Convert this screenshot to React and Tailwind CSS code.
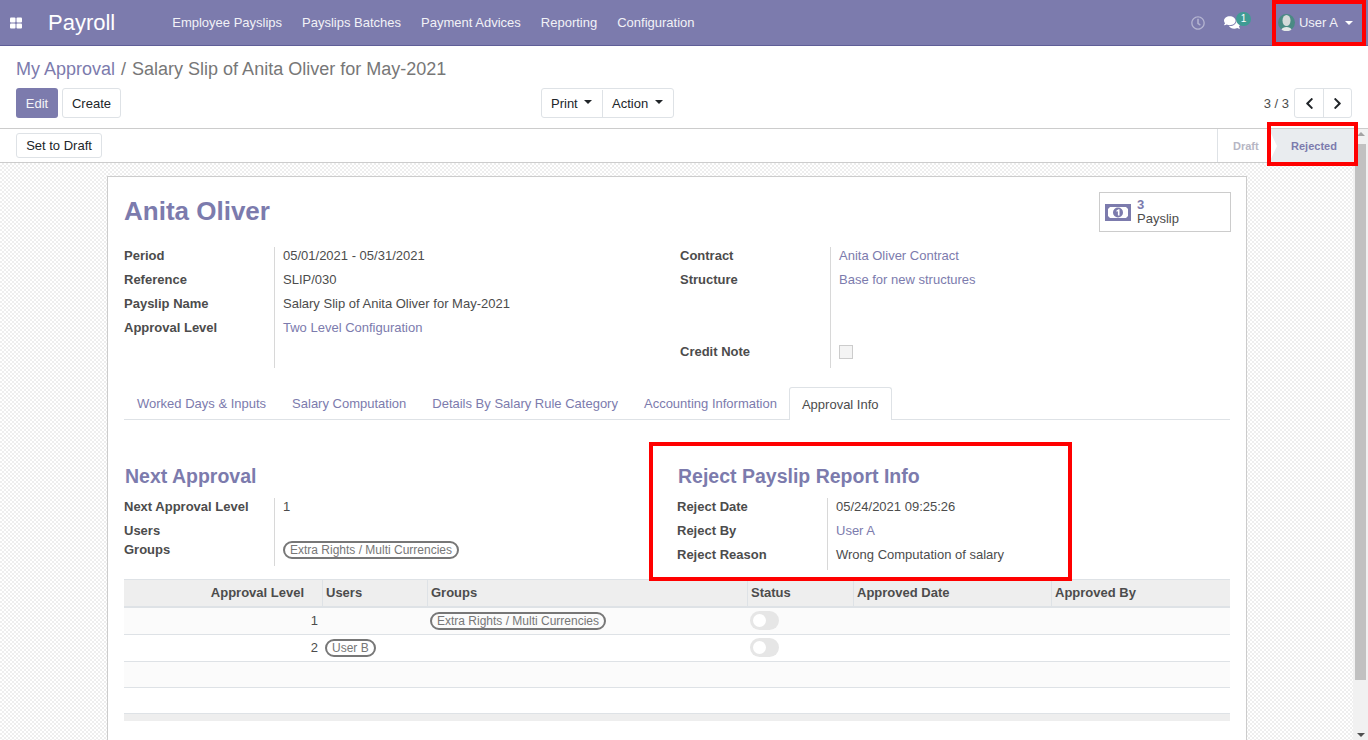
import React from 'react';
import { FaRegClock, FaComments, FaChevronLeft, FaChevronRight } from 'react-icons/fa';

const Caret = ({ className = '' }) => (
  <span className={`inline-block w-0 h-0 border-x-[4px] border-x-transparent border-t-[4px] ${className}`} />
);

const Pill = ({ children }) => (
  <span className="inline-flex items-center h-[18px] px-[5px] rounded-full border-2 border-[#777777] text-[12px] leading-none text-[#777777] whitespace-nowrap">
    {children}
  </span>
);

const Toggle = () => (
  <span className="-mt-px flex items-center w-[29px] h-[19px] rounded-full bg-[#e6e6e6] pl-[3px]">
    <span className="w-[13px] h-[13px] rounded-full bg-white" />
  </span>
);

const Row = ({ label, children, h = 'h-[24px]', pb = '' }) => (
  <div className={`flex ${h}`}>
    <div className={`w-[150px] shrink-0 font-bold text-[#4c4c4c] flex items-center ${pb}`}>{label}</div>
    <div className={`pl-2 flex items-center border-l border-[#d8d8d8] grow ${pb}`}>{children}</div>
  </div>
);

const Link = ({ children }) => <span className="text-[#7c7bad]">{children}</span>;

const cols = 'grid grid-cols-[198px_105px_320px_106px_198px_179px]';

const TH = ({ children, right }) => (
  <div className={`flex items-center h-[26px] px-[3px] font-bold border-l border-[#dee2e6] first:border-l-0 ${right ? 'justify-end pr-[18px]' : ''}`}>
    {children}
  </div>
);

export default function App() {
  return (
    <div className="h-[740px] w-[1368px] overflow-hidden flex flex-col relative bg-white text-[13px] leading-[20px] text-[#4c4c4c] font-['Liberation_Sans',Arial,sans-serif]">
      {/* Navbar */}
      <header className="h-[46px] shrink-0 bg-[#7c7bad] border-b border-[#5f5e97] flex items-center text-white">
        <svg className="ml-[10px] w-[12px] h-[12px]" viewBox="0 0 12 12" fill="#fff">
          <rect x="0" y="0.5" width="5.5" height="5" rx="1" />
          <rect x="6.5" y="0.5" width="5.5" height="5" rx="1" />
          <rect x="0" y="6.5" width="5.5" height="5" rx="1" />
          <rect x="6.5" y="6.5" width="5.5" height="5" rx="1" />
        </svg>
        <span className="ml-[26px] text-[22px] leading-none">Payroll</span>
        <nav className="ml-[57px] flex gap-[20px] text-[#f2f2f7]">
          <span>Employee Payslips</span>
          <span>Payslips Batches</span>
          <span>Payment Advices</span>
          <span>Reporting</span>
          <span>Configuration</span>
        </nav>
        <div className="ml-auto flex items-center">
          <FaRegClock className="text-[#b4b4d0] w-[14px] h-[14px]" />
          <span className="relative ml-[19px] mr-[38px]">
            <FaComments className="text-white w-[16px] h-[15px]" />
            <span className="absolute -top-[3px] left-[12px] w-[15px] h-[14px] rounded-full bg-[#3f9b94] text-[10px] leading-[14px] text-center text-white">1</span>
          </span>
          <svg className="w-[17px] h-[17px]" viewBox="0 0 17 17">
            <circle cx="8.5" cy="8.5" r="8.5" fill="#4a8a84" />
            <ellipse cx="8.5" cy="6.5" rx="4" ry="5.5" fill="#d5dada" />
            <path d="M3.5 15.5c1-3.5 9-3.5 10 0a8.5 8.5 0 0 1-10 0z" fill="#e4e8e8" />
          </svg>
          <span className="ml-[4px] text-[#f2f2f7]">User A</span>
          <Caret className="ml-[7px] mr-[15px] border-t-white" />
        </div>
      </header>

      {/* Control panel */}
      <section className="h-[83px] shrink-0 border-b border-[#cccccc] px-4 pt-[12px]">
        <div className="text-[18px] leading-[22px] text-[#777777] flex">
          <span className="text-[#7c7bad]">My Approval</span>
          <span className="mx-[6px]">/</span>
          <span>Salary Slip of Anita Oliver for May-2021</span>
        </div>
        <div className="mt-[8px] flex items-center relative">
          <button className="h-[30px] w-[42px] pt-px rounded-[3px] bg-[#7c7bad] text-[#f4f4f8]">Edit</button>
          <button className="ml-[4px] h-[30px] w-[59px] pt-px rounded-[3px] border border-[#dee2e6] text-[#212529]">Create</button>
          <div className="ml-[420px] flex h-[30px] pt-px border border-[#dee2e6] rounded-[3px] text-[#212529]">
            <span className="w-[61px] flex items-center pl-[9px] border-r border-[#dee2e6]">Print<Caret className="ml-[6px] mb-[3px] border-t-[#212529]" /></span>
            <span className="w-[70px] flex items-center pl-[9px]">Action<Caret className="ml-[7px] mb-[3px] border-t-[#212529]" /></span>
          </div>
          <span className="ml-auto mr-[5px] text-[#4c4c4c] pt-px">3 / 3</span>
          <div className="flex h-[30px] border border-[#dee2e6] rounded-[3px] text-[#212529]">
            <span className="w-[29px] flex items-center justify-center border-r border-[#dee2e6]"><FaChevronLeft className="w-[13px] h-[13px]" /></span>
            <span className="w-[27px] flex items-center justify-center"><FaChevronRight className="w-[13px] h-[13px]" /></span>
          </div>
        </div>
      </section>

      {/* Below control panel */}
      <div className="flex grow min-h-0">
        <div className="grow min-w-0 flex flex-col">
          {/* Status bar */}
          <div className="h-[34px] shrink-0 border-b border-[#cccccc] flex items-center pl-4">
            <button className="h-[25px] w-[86px] rounded-[3px] border border-[#dee2e6] text-[#212529]">Set to Draft</button>
            <div className="ml-auto h-full flex border-l border-[#dee2e6] text-[11px] font-bold">
              <span className="w-[51px] flex items-center pl-[15px] text-[#b6b6c4]">Draft</span>
              <span className="relative w-[84px] bg-[#e9ecef] flex items-center justify-center pl-[6px] text-[#7c7bad]">
                <span className="absolute left-0 top-0 border-y-[17px] border-y-transparent border-l-[8px] border-l-white" />
                Rejected
              </span>
            </div>
          </div>

          {/* Content */}
          <div className="grow min-h-0 overflow-hidden bg-[repeating-conic-gradient(#eeeeee_0_25%,#ffffff_0_50%)] bg-[length:4px_4px] pt-[13px] pl-[107px]">
            <div className="w-[1140px] h-[600px] bg-white border border-[#cccccc] px-4 pt-[15px]">
              {/* Title */}
              <div className="flex justify-between items-start h-[56px] -mr-px">
                <h1 className="text-[26px] leading-[38px] font-bold text-[#7c7bad]">Anita Oliver</h1>
                <div className="w-[132px] h-[40px] border border-[#cccccc] flex items-center pl-[5px]">
                  <svg className="w-[26px] h-[17px] shrink-0" viewBox="0 0 26 17">
                    <rect width="26" height="17" fill="#7c7bad" />
                    <path d="M5 3h16l2 2v7l-2 2H5l-2-2V5z" fill="#fff" />
                    <circle cx="13" cy="8.5" r="5" fill="#7c7bad" />
                    <path d="M11.5 6.5l2-1.2h1v6.2h-1.6V7.2l-1.4.6z" fill="#fff" />
                  </svg>
                  <div className="ml-[6px] leading-[14px]">
                    <div className="font-bold text-[#7c7bad]">3</div>
                    <div>Payslip</div>
                  </div>
                </div>
              </div>

              {/* Groups */}
              <div className="flex -mt-px">
                <div className="w-[556px] shrink-0">
                  <Row label="Period" h="h-[21px]" pb="pb-[3px]">05/01/2021 - 05/31/2021</Row>
                  <Row label="Reference">SLIP/030</Row>
                  <Row label="Payslip Name">Salary Slip of Anita Oliver for May-2021</Row>
                  <Row label="Approval Level"><Link>Two Level Configuration</Link></Row>
                  <Row label="" h="h-[28px]"><span /></Row>
                </div>
                <div className="w-[550px] shrink-0">
                  <Row label="Contract" h="h-[21px]" pb="pb-[3px]"><Link>Anita Oliver Contract</Link></Row>
                  <Row label="Structure"><Link>Base for new structures</Link></Row>
                  <Row label=""><span /></Row>
                  <Row label=""><span /></Row>
                  <Row label="Credit Note" h="h-[28px]" pb="pb-[4px]">
                    <span className="w-[14px] h-[14px] border border-[#cccccc] bg-[#f4f4f4]" />
                  </Row>
                </div>
              </div>

              {/* Tabs */}
              <div className="mt-[19px] flex h-[33px] border-b border-[#dee2e6] text-[#7c7bad] w-[1106px]">
                <span className="px-[13px] pt-px flex items-center">Worked Days &amp; Inputs</span>
                <span className="px-[13px] pt-px flex items-center">Salary Computation</span>
                <span className="px-[13px] pt-px flex items-center">Details By Salary Rule Category</span>
                <span className="px-[13px] pt-px flex items-center">Accounting Information</span>
                <span className="-ml-px px-[12px] pt-px h-[33px] flex items-center bg-white border border-b-0 border-[#dee2e6] rounded-t-[3px] text-[#4c4c4c]">Approval Info</span>
              </div>

              {/* Approval info */}
              <div className="flex relative h-[159px]">
                <div className="w-[553px] pt-[43px]">
                  <h2 className="ml-px text-[19.5px] leading-[27px] font-bold text-[#7c7bad]">Next Approval</h2>
                  <div className="mt-[8px]">
                    <Row label="Next Approval Level" h="h-[21px]" pb="pb-[3px]"><span>1</span></Row>
                    <Row label="Users"><span /></Row>
                    <Row label="Groups" h="h-[28px] -mt-[5px]" pb="pb-[4px]"><Pill>Extra Rights / Multi Currencies</Pill></Row>
                  </div>
                </div>
                <div className="w-[553px] pt-[43px]">
                  <h2 className="ml-px text-[19.5px] leading-[27px] font-bold text-[#7c7bad]">Reject Payslip Report Info</h2>
                  <div className="mt-[8px]">
                    <Row label="Reject Date" h="h-[21px]" pb="pb-[3px]">05/24/2021 09:25:26</Row>
                    <Row label="Reject By"><Link>User A</Link></Row>
                    <Row label="Reject Reason" h="h-[27px]" pb="pb-[3px]">Wrong Computation of salary</Row>
                  </div>
                </div>
              </div>

              {/* Table */}
              <div className="w-[1106px]">
                <div className={`${cols} bg-[#eeeeee] border-t border-[#dee2e6] border-b-[2px] border-b-[#dee2e6] font-bold`}>
                  <TH right>Approval Level</TH>
                  <TH>Users</TH>
                  <TH>Groups</TH>
                  <TH>Status</TH>
                  <TH>Approved Date</TH>
                  <TH>Approved By</TH>
                </div>
                <div className={`${cols} h-[27px] items-center bg-[#fbfbfb] border-b border-[#dee2e6]`}>
                  <div className="text-right pr-[4px]">1</div>
                  <div />
                  <div className="pl-[3px]"><Pill>Extra Rights / Multi Currencies</Pill></div>
                  <div className="pl-[3px]"><Toggle /></div>
                </div>
                <div className={`${cols} h-[27px] items-center border-b border-[#dee2e6]`}>
                  <div className="text-right pr-[4px]">2</div>
                  <div className="pl-[3px]"><Pill>User B</Pill></div>
                  <div />
                  <div className="pl-[3px]"><Toggle /></div>
                </div>
                <div className="h-[26px] bg-[#fbfbfb] border-b border-[#dee2e6]" />
                <div className="h-[26px] border-b border-[#dee2e6]" />
                <div className="h-[7px] bg-[#eeeeee]" />
              </div>
            </div>
          </div>
        </div>

        {/* Scrollbar */}
        <div className="w-[15px] shrink-0 bg-[#f1f1f1] flex flex-col items-center">
          <span className="mt-[3px] border-x-[4px] border-x-transparent border-b-[4px] border-b-[#a3a3a3]" />
          <div className="mt-[8px] w-[11px] h-[536px] bg-[#c1c1c1]" />
          <span className="mt-auto mb-[3px] border-x-[4px] border-x-transparent border-t-[4px] border-t-[#505050]" />
        </div>
      </div>

      {/* Red annotation frames */}
      <div className="absolute left-[1272px] top-0 w-[94px] h-[46px] border-[4px] border-[#ff0000]" />
      <div className="absolute left-[1267px] top-[122px] w-[91px] h-[44px] border-[4px] border-[#ff0000]" />
      <div className="absolute left-[649px] top-[442px] w-[423px] h-[139px] border-[4px] border-[#ff0000]" />
    </div>
  );
}
